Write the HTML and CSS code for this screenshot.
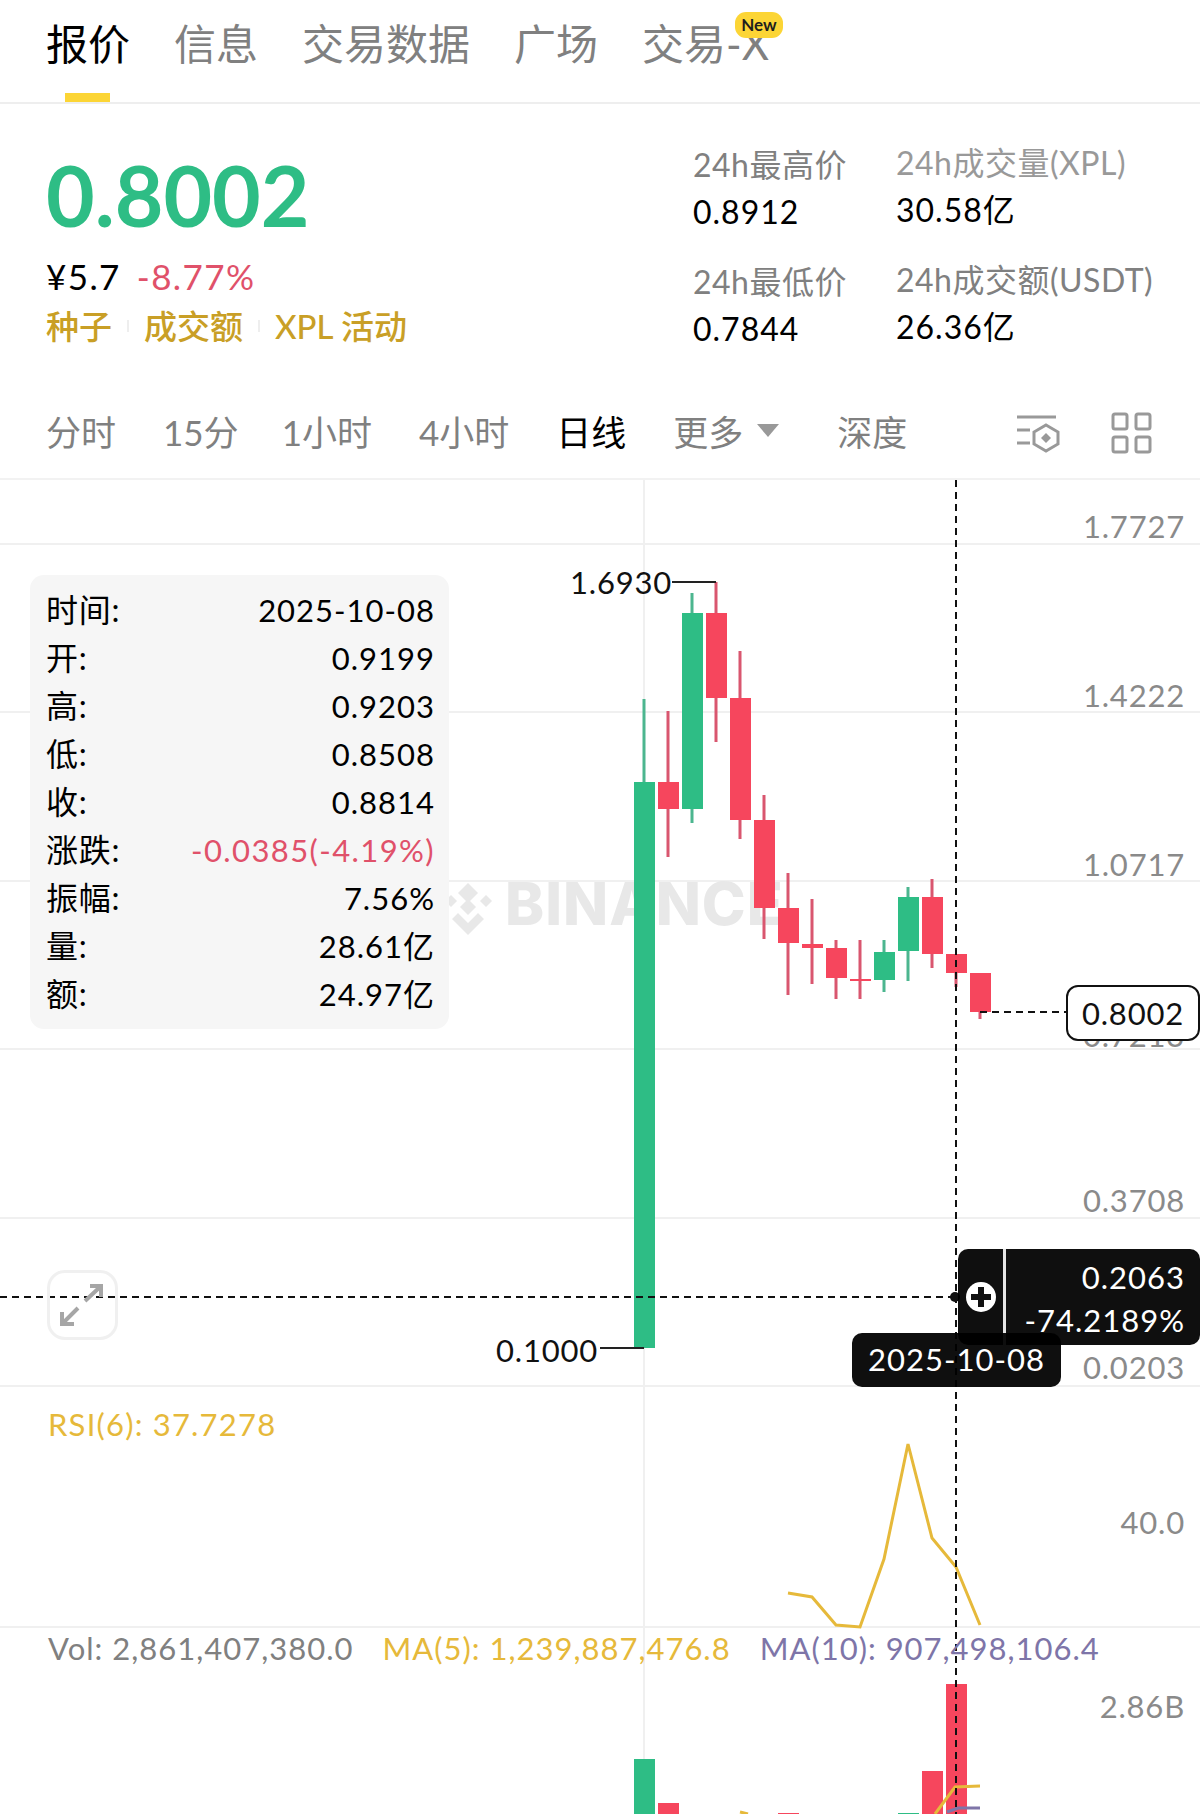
FILE: index.html
```html
<!DOCTYPE html>
<html>
<head>
    <meta charset="UTF-8">
    <title>XPL</title>
    <link rel="stylesheet" href="styles.css">
</head>
<body>

<!-- 顶部标签 -->
<div class="tabs">
    <span class="tab active">报价</span>
    <span class="tab">信息</span>
    <span class="tab">交易数据</span>
    <span class="tab">广场</span>
    <span class="tab">交易-X<b class="new_badge">New</b></span>
</div>

<!-- 价格 -->
<div class="quote">
    <div class="quote_left">
        <div class="price">0.8002</div>
        <div class="price_sub"><span class="cny">¥5.7</span><span class="change">-8.77%</span></div>
        <div class="tags">
            <span>种子</span><i class="tag_sep"></i>
            <span>成交额</span><i class="tag_sep"></i>
            <span>XPL 活动</span>
        </div>
    </div>
    <div class="stat_col">
        <div class="stat_label">24h最高价</div>
        <div class="stat_value">0.8912</div>
        <div class="stat_label">24h最低价</div>
        <div class="stat_value">0.7844</div>
    </div>
    <div class="stat_col stat_col2">
        <div class="stat_label light">24h成交量(XPL)</div>
        <div class="stat_value">30.58亿</div>
        <div class="stat_label">24h成交额(USDT)</div>
        <div class="stat_value">26.36亿</div>
    </div>
</div>

<!-- 周期 -->
<div class="intervals">
    <span>分时</span>
    <span class="tf15">15分</span>
    <span>1小时</span>
    <span>4小时</span>
    <span class="active">日线</span>
    <span class="more">更多<i class="arrow"></i></span>
    <span class="depth">深度</span>
    <svg class="tool_icon first" width="46" height="42" viewBox="0 0 46 42">
        <path d="M1 5H40M1 18H14M1 31H14" class="tool_line"/>
        <path d="M30 13L42 20V32L30 39L18 32V20Z" class="tool_line"/>
        <path d="M30 21L35 26L30 31L25 26Z" class="tool_fill"/>
    </svg>
    <svg class="tool_icon" width="42" height="42" viewBox="0 0 42 42">
        <rect x="2" y="2" width="14" height="15" rx="2" class="tool_line"/>
        <rect x="25" y="2" width="14" height="15" rx="2" class="tool_line"/>
        <rect x="2" y="25" width="14" height="15" rx="2" class="tool_line"/>
        <rect x="25" y="25" width="14" height="15" rx="2" class="tool_line"/>
    </svg>
</div>

<!-- 图表 -->
<div class="chart">
    <svg class="chart_svg" width="1200" height="1334" viewBox="0 480 1200 1334">
        <!-- 网格 -->
        <path class="grid" d="M0 544H1200M0 712H1200M0 881H1200M0 1049H1200M0 1218H1200M0 1386H1200M0 1627H1200M644 480V1814"/>

        <!-- 水印 -->
        <g class="wm_logo">
            <path d="M468 883L478 893L468 903L458 893Z"/>
            <path d="M450 895L456 901L450 907L444 901Z" transform="translate(1 0)"/>
            <path d="M486 895L492 901L486 907L480 901Z"/>
            <path d="M468 899L476 907L468 915L460 907Z"/>
            <path d="M458 913L468 923L478 913L484 919L468 935L452 919Z"/>
        </g>
        <text class="wm_text" x="505" y="925">BINANCE</text>

        <!-- 坐标 -->
        <text class="axis" x="1185" y="538">1.7727</text>
        <text class="axis" x="1185" y="707">1.4222</text>
        <text class="axis" x="1185" y="876">1.0717</text>
        <text class="axis" x="1185" y="1047">0.7213</text>
        <text class="axis" x="1185" y="1212">0.3708</text>
        <text class="axis" x="1185" y="1379">0.0203</text>
        <text class="axis" x="1185" y="1534">40.0</text>
        <text class="axis" x="1185" y="1718">2.86B</text>

        <!-- 影线 -->
        <path class="wick_up" d="M644 699V782M692 593V613M692 809V823M884 940V952M884 980V992M908 887V897M908 951V981"/>
        <path class="wick_down" d="M668 711V857M716 582V742M740 651V839M764 795V939M788 873V995M812 899V984M836 940V999M860 940V999M932 879V968M956 954V987M980 1012V1019"/>

        <!-- 实体 -->
        <g class="up">
            <rect x="634" y="782" width="21" height="566"/>
            <rect x="682" y="613" width="21" height="196"/>
            <rect x="874" y="952" width="21" height="28"/>
            <rect x="898" y="897" width="21" height="54"/>
        </g>
        <g class="down">
            <rect x="658" y="782" width="21" height="27"/>
            <rect x="706" y="613" width="21" height="85"/>
            <rect x="730" y="698" width="21" height="122"/>
            <rect x="754" y="820" width="21" height="88"/>
            <rect x="778" y="908" width="21" height="35"/>
            <rect x="802" y="944" width="21" height="4"/>
            <rect x="826" y="948" width="21" height="30"/>
            <rect x="850" y="979" width="21" height="2"/>
            <rect x="922" y="897" width="21" height="57"/>
            <rect x="946" y="954" width="21" height="19"/>
            <rect x="970" y="973" width="21" height="39"/>
        </g>

        <!-- 最高 最低 -->
        <text class="mark" x="570" y="594">1.6930</text>
        <path class="mark_line" d="M672 582H716"/>
        <text class="mark" x="496" y="1362">0.1000</text>
        <path class="mark_line" d="M600 1348H644"/>

        <!-- RSI -->
        <polyline class="line_yellow" points="788,1593 812,1597 836,1625 860,1627 884,1559 908,1444 932,1538 956,1567 980,1625"/>

        <!-- 成交量 -->
        <g class="up">
            <rect x="634" y="1759" width="21" height="55"/>
            <rect x="898" y="1813" width="21" height="1"/>
        </g>
        <g class="down">
            <rect x="658" y="1803" width="21" height="11"/>
            <rect x="778" y="1813" width="21" height="1"/>
            <rect x="922" y="1771" width="21" height="43"/>
            <rect x="946" y="1684" width="21" height="130"/>
        </g>
        <polyline class="line_yellow" points="740,1812 748,1814"/>
        <polyline class="line_yellow" points="935,1814 955,1787 980,1786"/>
        <polyline class="line_purple" points="947,1812 958,1808 980,1808"/>

        <!-- 十字线 -->
        <path class="dash" d="M956 480V1814M0 1297H956M980 1012H1066"/>
        <circle class="dot" cx="955" cy="1297" r="5"/>
    </svg>

    <!-- 弹窗 -->
    <div class="ohlc">
        <div class="ohlc_row"><span>时间:</span><span>2025-10-08</span></div>
        <div class="ohlc_row"><span>开:</span><span>0.9199</span></div>
        <div class="ohlc_row"><span>高:</span><span>0.9203</span></div>
        <div class="ohlc_row"><span>低:</span><span>0.8508</span></div>
        <div class="ohlc_row"><span>收:</span><span>0.8814</span></div>
        <div class="ohlc_row"><span>涨跌:</span><span class="neg">-0.0385(-4.19%)</span></div>
        <div class="ohlc_row"><span>振幅:</span><span>7.56%</span></div>
        <div class="ohlc_row"><span>量:</span><span>28.61亿</span></div>
        <div class="ohlc_row"><span>额:</span><span>24.97亿</span></div>
    </div>

    <div class="last_tag">0.8002</div>

    <div class="cross_tag">
        <div class="cross_plus">
            <svg width="32" height="32" viewBox="0 0 32 32">
                <circle cx="16" cy="16" r="15" fill="#fff"/>
                <path d="M16 6V26M6 16H26" class="plus_line"/>
            </svg>
        </div>
        <div class="cross_vals">
            <div>0.2063</div>
            <div>-74.2189%</div>
        </div>
    </div>
    <div class="date_tag">2025-10-08</div>

    <div class="expand">
        <svg width="71" height="70" viewBox="0 0 71 70">
            <path d="M38 31L53 17M43 16H54V27M31 38L16 53M15 42V54H27" class="expand_line"/>
        </svg>
    </div>

    <div class="rsi_label">RSI(6): 37.7278</div>
    <div class="vol_legend">
        <span class="vol">Vol: 2,861,407,380.0</span>
        <span class="ma5">MA(5): 1,239,887,476.8</span>
        <span class="ma10">MA(10): 907,498,106.4</span>
    </div>
</div>

</body>
</html>
```

FILE: styles.css
```css
*{ box-sizing: border-box;}
body{
    margin: 0;
    width: 1200px;
    height: 1814px;
    overflow: hidden;
    background: white;
    color: #000;
    font-family: Lato, "Noto Sans CJK SC", sans-serif;
    letter-spacing: .8px;
}

/* 顶部标签 */
.tabs{
    display: flex;
    gap: 44px;
    height: 104px;
    padding: 20px 0 0 46px;
    border-bottom: 2px solid #eee;
    font-size: 42px;
    line-height: 48px;
    color: #808080;
    letter-spacing: 0;
}
.tab{ position: relative; height: 82px;}
.tab.active{ color: #000;}
.tab.active::after{
    content: "";
    position: absolute;
    left: 19px;
    bottom: 0;
    width: 45px;
    height: 9px;
    background: #fcd535;
}
.new_badge{
    position: absolute;
    right: -14px;
    top: -8px;
    width: 48px;
    height: 26px;
    border-radius: 11px;
    background: #fcd535;
    color: #1e1e1e;
    font-size: 17px;
    font-weight: 700;
    line-height: 26px;
    text-align: center;
}

/* 价格 */
.quote{
    display: flex;
    height: 282px;
}
.quote_left{
    width: 693px;
    padding: 46px 0 0 46px;
}
.price{
    font-size: 84px;
    font-weight: 700;
    line-height: 90px;
    color: #2ebd85;
    letter-spacing: 0;
}
.price_sub{
    display: flex;
    gap: 16px;
    margin-top: 16px;
    font-size: 35px;
    line-height: 40px;
    letter-spacing: 1.4px;
}
.change{ color: #e0516a;}
.tags{
    display: flex;
    align-items: center;
    margin-top: 10px;
    font-size: 33px;
    font-weight: 500;
    line-height: 40px;
    color: #c99f26;
    letter-spacing: 0;
}
.tag_sep{
    width: 2px;
    height: 12px;
    margin: 0 15px;
    background: #eee;
}
.stat_col{
    width: 203px;
    padding-top: 41px;
}
.stat_col2{ width: auto; padding-top: 39px;}
.stat_label{
    font-size: 32px;
    line-height: 40px;
    color: #808080;
    letter-spacing: .5px;
    white-space: nowrap;
}
.stat_label.light{ color: #999;}
.stat_value{
    margin: 7px 0 30px;
    font-size: 32px;
    line-height: 40px;
    letter-spacing: 1px;
    white-space: nowrap;
}

/* 周期 */
.intervals{
    display: flex;
    align-items: center;
    gap: 47px;
    height: 94px;
    padding: 0 0 3px 46px;
    border-bottom: 2px solid #f2f2f2;
    font-size: 35px;
    color: #808080;
    letter-spacing: 0;
}
.intervals .active{ color: #000;}
.tf15{ margin-right: -4px;}
.more{ display: flex; align-items: center; gap: 14px;}
.arrow{
    width: 0;
    height: 0;
    border: 11px solid transparent;
    border-top: 13px solid #999;
    border-bottom: 0;
}
.depth{ margin-left: 11px;}
.tool_icon{ flex: none; margin-top: 4px;}
.tool_icon.first{ margin: 4px 2px 0 auto;}
.tool_icon:last-child{ margin-right: 47px;}
.tool_line{ fill: none; stroke: #999; stroke-width: 3;}
.tool_fill{ fill: #999;}

/* 图表 */
.chart{
    position: relative;
    height: 1334px;
    font-size: 31px;
}
.chart_svg{
    position: absolute;
    left: 0;
    top: 0;
}
.grid{ fill: none; stroke: #f0f0f0; stroke-width: 2;}
.wm_logo{ fill: #e8e8e8;}
.wm_text{
    font-family: Inter, sans-serif;
    font-size: 59px;
    font-weight: 800;
    fill: #e8e8e8;
    letter-spacing: 1px;
}
.axis{
    font-size: 31px;
    fill: #8a8a8a;
    text-anchor: end;
}
.wick_up{ fill: none; stroke: #4cb68f; stroke-width: 3;}
.wick_down{ fill: none; stroke: #d9566f; stroke-width: 3;}
.up{ fill: #2ebd85;}
.down{ fill: #f6465d;}
.mark{ font-size: 31px; fill: #111;}
.mark_line{ fill: none; stroke: #222; stroke-width: 2;}
.line_yellow{ fill: none; stroke: #e6b93a; stroke-width: 3;}
.line_purple{ fill: none; stroke: #7e75a8; stroke-width: 3;}
.dash{ fill: none; stroke: #111; stroke-width: 2; stroke-dasharray: 7 5;}
.dot{ fill: #111;}

.ohlc{
    position: absolute;
    left: 30px;
    top: 95px;
    width: 419px;
    height: 454px;
    padding: 11px 14px 0 16px;
    border-radius: 14px;
    background: #f6f6f6;
    line-height: 48px;
    letter-spacing: 1px;
}
.ohlc_row{ display: flex; justify-content: space-between;}
.ohlc_row span:first-child{ font-size: 32px; letter-spacing: .8px;}
.neg{ color: #e0516a; letter-spacing: 1.4px;}

.last_tag{
    position: absolute;
    left: 1066px;
    top: 505px;
    width: 134px;
    height: 56px;
    padding: 8px 14px 0 0;
    border: 2px solid #111;
    border-radius: 12px;
    background: white;
    color: #111;
    line-height: 36px;
    text-align: right;
}
.cross_tag{
    position: absolute;
    left: 958px;
    top: 769px;
    width: 242px;
    height: 96px;
    display: flex;
    border-radius: 10px;
    background: rgba(0,0,0,.94);
    color: white;
}
.cross_plus{
    display: flex;
    align-items: center;
    justify-content: center;
    width: 48px;
    border-right: 3px solid #e6e6e6;
}
.cross_vals{
    flex: 1;
    padding: 7px 15px 0 0;
    line-height: 43px;
    text-align: right;
    letter-spacing: 1px;
}
.plus_line{ fill: none; stroke: #111; stroke-width: 6;}
.date_tag{
    position: absolute;
    left: 852px;
    top: 853px;
    width: 209px;
    height: 54px;
    border-radius: 10px;
    background: rgba(0,0,0,.94);
    color: white;
    line-height: 52px;
    text-align: center;
    letter-spacing: 1px;
}
.expand{
    position: absolute;
    left: 47px;
    top: 790px;
    width: 71px;
    height: 70px;
    border: 3px solid #f0f0f0;
    border-radius: 18px;
}
.expand svg{ position: absolute; left: -3px; top: -3px;}
.expand_line{ fill: none; stroke: #a6a6a6; stroke-width: 4;}

.rsi_label{
    position: absolute;
    left: 48px;
    top: 926px;
    line-height: 36px;
    color: #e6b93a;
    letter-spacing: 1.2px;
}
.vol_legend{
    position: absolute;
    left: 48px;
    top: 1150px;
    display: flex;
    gap: 29px;
    line-height: 36px;
    white-space: nowrap;
    letter-spacing: 1px;
}
.vol{ color: #808080;}
.ma5{ color: #e6b93a;}
.ma10{ color: #7e75a8;}
```
